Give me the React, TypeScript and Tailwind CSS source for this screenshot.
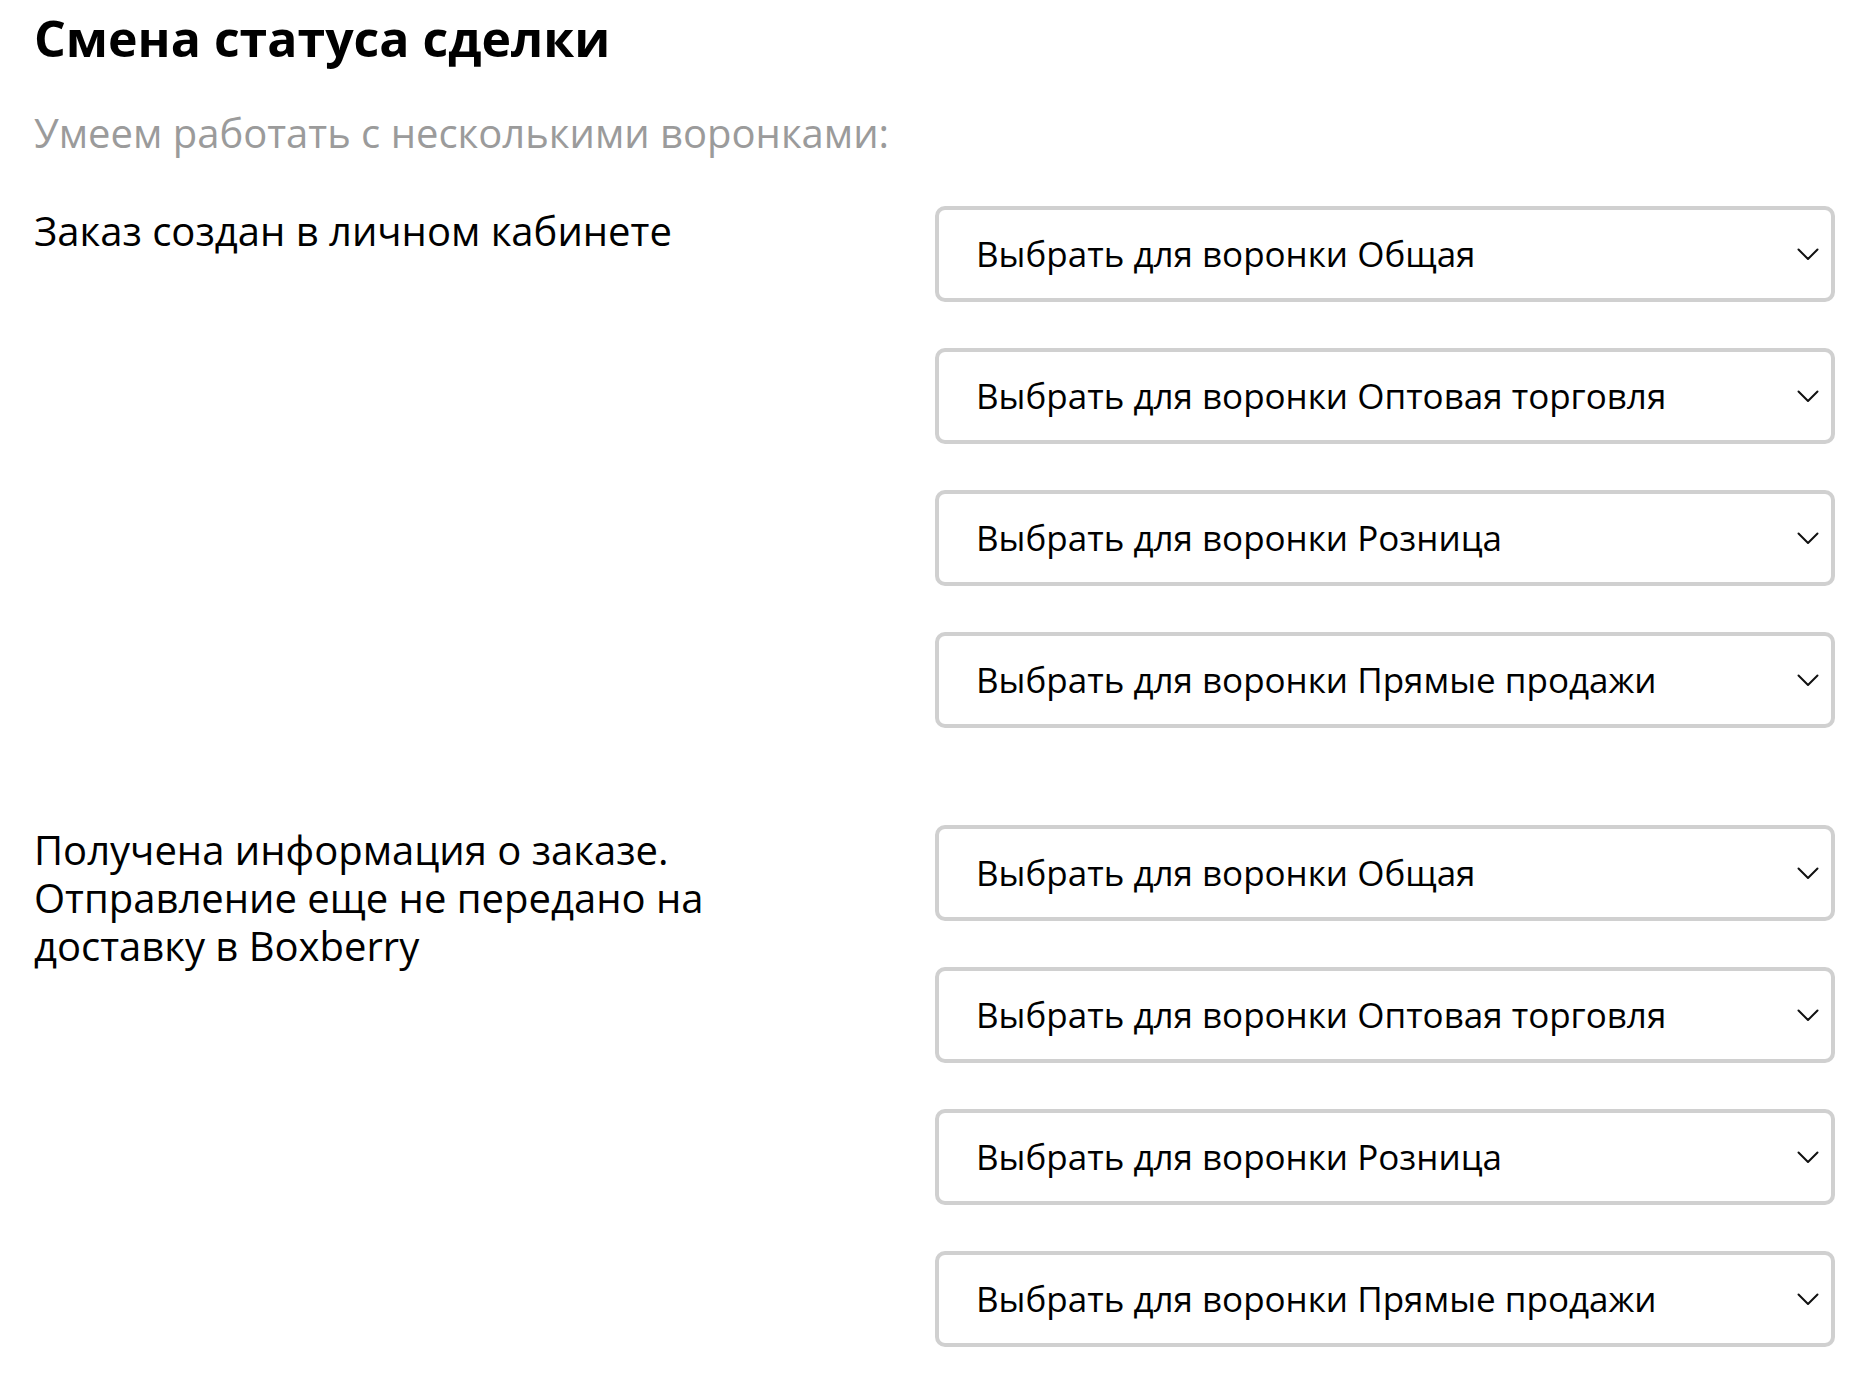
import React from 'react';

const funnels = ['Общая', 'Оптовая торговля', 'Розница', 'Прямые продажи'];

const statuses = [
  'Заказ создан в личном кабинете',
  'Получена информация о заказе. Отправление еще не передано на доставку в Boxberry',
];

const Chevron = () => (
  <svg width="22" height="13" viewBox="0 0 22 13" fill="none" className="shrink-0">
    <polyline points="1.5,1.5 11,11 20.5,1.5" stroke="#111" strokeWidth="2" strokeLinecap="round" strokeLinejoin="round" />
  </svg>
);

const FunnelSelect: React.FC<{ name: string }> = ({ name }) => (
  <button
    type="button"
    className="h-[96px] w-full border-4 border-[#d0d0d0] rounded-[10px] bg-white flex items-center justify-between pl-[37px] pr-[12px] text-left"
  >
    <span className="text-[35px] leading-[44px] text-black">Выбрать для воронки {name}</span>
    <Chevron />
  </button>
);

export default function App() {
  return (
    <div className="min-h-screen bg-white pl-[34px] pr-[32px] pt-[9px] pb-[36px] font-['Open_Sans',sans-serif] text-black">
      <h1 className="text-[50px] leading-[58px] font-bold">Смена статуса сделки</h1>
      <p className="mt-[42px] text-[40px] leading-[48px] text-[#9b9b9b]">Умеем работать с несколькими воронками:</p>

      <div className="mt-[49px] flex flex-col gap-[97px]">
        {statuses.map((status) => (
          <div key={status} className="grid grid-cols-[901px_1fr]">
            <div className="text-[40px] leading-[48px] max-w-[760px] pt-px">{status}</div>
            <div className="flex flex-col gap-[46px]">
              {funnels.map((f) => (
                <FunnelSelect key={f} name={f} />
              ))}
            </div>
          </div>
        ))}
      </div>
    </div>
  );
}
